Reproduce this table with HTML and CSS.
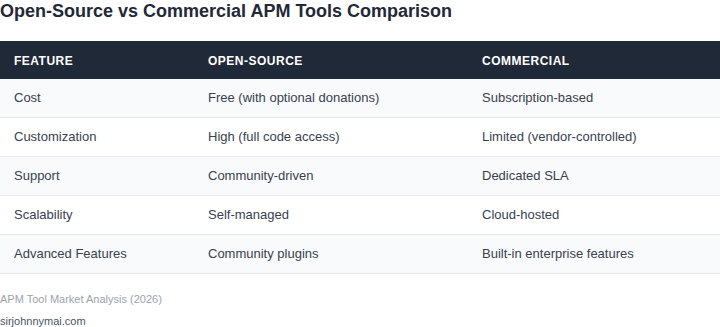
FILE: index.html
```html
<!DOCTYPE html>
<html>
<head>
<meta charset="utf-8">
<link rel="stylesheet" href="styles.css">
</head>
<body>
<h2 class="title">Open-Source vs Commercial APM Tools Comparison</h2>
<table class="cmp">
  <colgroup>
    <col class="c1"><col class="c2"><col class="c3">
  </colgroup>
  <thead>
    <tr><th>Feature</th><th>Open-Source</th><th>Commercial</th></tr>
  </thead>
  <tbody>
    <tr><td>Cost</td><td>Free (with optional donations)</td><td>Subscription-based</td></tr>
    <tr><td>Customization</td><td>High (full code access)</td><td>Limited (vendor-controlled)</td></tr>
    <tr><td>Support</td><td>Community-driven</td><td>Dedicated SLA</td></tr>
    <tr><td>Scalability</td><td>Self-managed</td><td>Cloud-hosted</td></tr>
    <tr><td>Advanced Features</td><td>Community plugins</td><td>Built-in enterprise features</td></tr>
  </tbody>
</table>
<p class="source">APM Tool Market Analysis (2026)</p>
<p class="site">sirjohnnymai.com</p>
</body>
</html>
```
FILE: styles.css
```css
html, body {
  margin: 0;
  padding: 0;
  background: #ffffff;
  font-family: "Liberation Sans", Arial, sans-serif;
}
.title {
  margin: 0 0 19px 0;
  font-size: 18px;
  line-height: 22px;
  font-weight: bold;
  color: #1f2937;
}
.cmp {
  width: 100%;
  border-collapse: collapse;
  table-layout: fixed;
}
.c1 { width: 194px; }
.c2 { width: 274px; }
.cmp th {
  background: #1f2937;
  color: #ffffff;
  text-align: left;
  font-size: 12px;
  line-height: 14px;
  font-weight: bold;
  text-transform: uppercase;
  letter-spacing: 0.5px;
  padding: 13px 14px 11px 14px;
}
.cmp td {
  font-size: 13px;
  line-height: 14px;
  color: #374151;
  padding: 12px 14px;
  border-bottom: 1px solid #e5e7eb;
}
.cmp tbody tr:nth-child(odd) td {
  background: #f9fafb;
}
.source {
  margin: 18px 0 0 0;
  font-size: 11px;
  line-height: 14px;
  color: #9ca3af;
}
.site {
  margin: 8px 0 0 0;
  font-size: 11px;
  line-height: 14px;
  color: #4b5563;
}
```
